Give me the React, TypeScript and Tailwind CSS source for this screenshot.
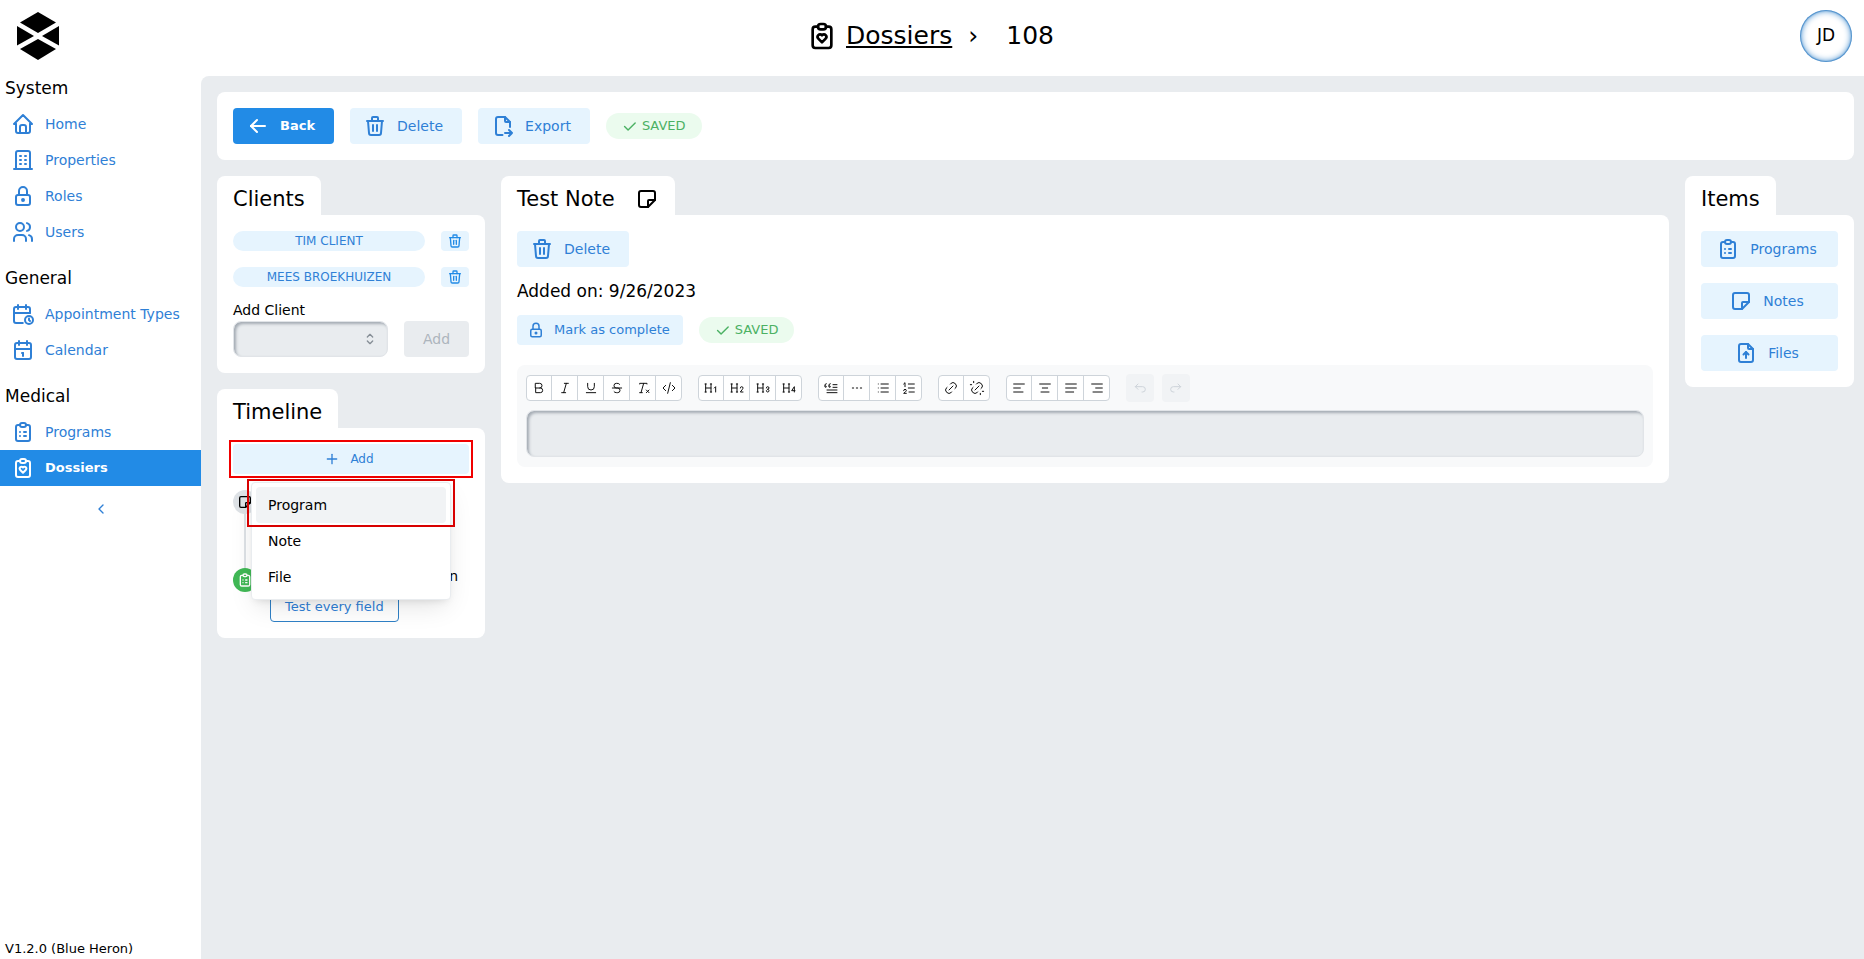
import type { ReactNode } from "react";
import type { IconType } from "react-icons";
import {
  TbAlignCenter,
  TbAlignJustified,
  TbAlignLeft,
  TbAlignRight,
  TbArrowBackUp,
  TbArrowForwardUp,
  TbArrowLeft,
  TbBlockquote,
  TbBold,
  TbBuilding,
  TbCalendar,
  TbCalendarTime,
  TbCheck,
  TbChevronLeft,
  TbClearFormatting,
  TbClipboardHeart,
  TbClipboardList,
  TbCode,
  TbFileExport,
  TbFileUpload,
  TbH1,
  TbH2,
  TbH3,
  TbH4,
  TbHome,
  TbItalic,
  TbLineDashed,
  TbLink,
  TbList,
  TbListNumbers,
  TbLock,
  TbNote,
  TbPlus,
  TbSelector,
  TbStrikethrough,
  TbTrash,
  TbUnderline,
  TbUnlink,
  TbUsers,
} from "react-icons/tb";

type NavItem = { label: string; icon: IconType; active?: boolean };

const sections: { title: string; items: NavItem[] }[] = [
  {
    title: "System",
    items: [
      { label: "Home", icon: TbHome },
      { label: "Properties", icon: TbBuilding },
      { label: "Roles", icon: TbLock },
      { label: "Users", icon: TbUsers },
    ],
  },
  {
    title: "General",
    items: [
      { label: "Appointment Types", icon: TbCalendarTime },
      { label: "Calendar", icon: TbCalendar },
    ],
  },
  {
    title: "Medical",
    items: [
      { label: "Programs", icon: TbClipboardList },
      { label: "Dossiers", icon: TbClipboardHeart, active: true },
    ],
  },
];

const toolGroups: { label: string; icon: IconType }[][] = [
  [
    { label: "Bold", icon: TbBold },
    { label: "Italic", icon: TbItalic },
    { label: "Underline", icon: TbUnderline },
    { label: "Strikethrough", icon: TbStrikethrough },
    { label: "Clear formatting", icon: TbClearFormatting },
    { label: "Code", icon: TbCode },
  ],
  [
    { label: "Heading 1", icon: TbH1 },
    { label: "Heading 2", icon: TbH2 },
    { label: "Heading 3", icon: TbH3 },
    { label: "Heading 4", icon: TbH4 },
  ],
  [
    { label: "Blockquote", icon: TbBlockquote },
    { label: "Horizontal line", icon: TbLineDashed },
    { label: "Bullet list", icon: TbList },
    { label: "Ordered list", icon: TbListNumbers },
  ],
  [
    { label: "Link", icon: TbLink },
    { label: "Remove link", icon: TbUnlink },
  ],
  [
    { label: "Align left", icon: TbAlignLeft },
    { label: "Align center", icon: TbAlignCenter },
    { label: "Justify", icon: TbAlignJustified },
    { label: "Align right", icon: TbAlignRight },
  ],
];

function Logo() {
  return (
    <svg viewBox="0 0 42 48" className="ml-[5px] h-12 w-[42px]" aria-label="Logo" role="img">
      <path d="M21 0L39 10.5L21 21L3 10.5Z" />
      <path d="M21 27L39 37L21 48L3 37Z" />
      <path d="M0 14L17 24L0 33.500Z" />
      <path d="M42 14L25 24L42 33.500Z" />
    </svg>
  );
}

function ActionButton({ icon: Icon, label, filled }: { icon: IconType; label: string; filled?: boolean }) {
  return (
    <button
      type="button"
      className={
        "flex h-9 items-center justify-center gap-[10px] rounded pr-[19px] pl-[13px] " +
        (filled ? "bg-[#228be6] text-[13px] font-bold text-white" : "bg-[#e6f4fe] text-sm text-[#2f80d6]")
      }
    >
      <Icon size={24} />
      {label}
    </button>
  );
}

function SavedBadge() {
  return (
    <span className="flex h-[26px] items-center gap-1 rounded-full bg-[#ebfbee] pr-4 pl-[15px] text-[13px] text-[#4bb163]">
      <TbCheck size={17} />
      SAVED
    </span>
  );
}

function Panel({ title, icon, children }: { title: string; icon?: ReactNode; children: ReactNode }) {
  return (
    <section className="flex flex-col items-stretch">
      <div className="flex h-[39px] items-center gap-5 self-start rounded-t-lg bg-white px-4 pt-[6px]">
        <h2 className="text-[21px] leading-6">{title}</h2>
        {icon}
      </div>
      <div className="rounded-lg rounded-tl-none bg-white p-4">{children}</div>
    </section>
  );
}

function ClientRow({ name }: { name: string }) {
  return (
    <li className="flex items-center gap-4">
      <span className="flex h-5 flex-1 items-center justify-center rounded-full bg-[#e6f4fe] text-xs text-[#2f80d6]">
        {name}
      </span>
      <button
        type="button"
        aria-label={"Remove " + name}
        className="flex h-5 w-7 items-center justify-center rounded bg-[#e6f4fe] text-[#228be6]"
      >
        <TbTrash size={16} />
      </button>
    </li>
  );
}

function ClientsPanel() {
  return (
    <Panel title="Clients">
      <ul className="flex flex-col gap-4">
        <ClientRow name="TIM CLIENT" />
        <ClientRow name="MEES BROEKHUIZEN" />
      </ul>
      <label htmlFor="client" className="mt-3 block text-sm leading-[22px]">
        Add Client
      </label>
      <div className="flex gap-4">
        <div className="relative flex-1">
          <select
            id="client"
            className="h-9 w-full appearance-none rounded-lg border border-[#e1e4e8] bg-[#e9ecef] shadow-[inset_2px_2px_3px_#a4abb3]"
          />
          <TbSelector size={16} className="pointer-events-none absolute top-[10px] right-[10px] text-[#868e96]" />
        </div>
        <button type="button" disabled className="h-9 w-[65px] rounded bg-[#e9ecef] text-sm text-[#adb5bd]">
          Add
        </button>
      </div>
    </Panel>
  );
}

function TimelinePanel() {
  return (
    <Panel title="Timeline">
      <div className="relative">
        <button
          type="button"
          className="flex h-[30px] w-full items-center justify-center gap-[10px] rounded bg-[#e6f4fe] pr-1 text-xs text-[#2f80d6]"
        >
          <TbPlus size={16} />
          Add
        </button>
        <div className="pointer-events-none absolute -inset-1 border-2 border-[#f00000]" />
        <div className="absolute top-[38px] left-[18px] z-10 w-[200px] rounded border border-[#e9ecef] bg-white p-1 shadow-[0_10px_25px_-5px_rgba(0,0,0,0.12),0_4px_8px_-4px_rgba(0,0,0,0.12)]">
          <ul role="menu">
            <li>
              <button type="button" role="menuitem" className="h-9 w-full rounded bg-[#f1f3f5] px-3 text-left text-sm">
                Program
              </button>
            </li>
            <li>
              <button type="button" role="menuitem" className="h-9 w-full rounded px-3 text-left text-sm">
                Note
              </button>
            </li>
            <li>
              <button type="button" role="menuitem" className="h-9 w-full rounded px-3 text-left text-sm">
                File
              </button>
            </li>
          </ul>
          <div className="pointer-events-none absolute -top-1 -right-[5px] -left-[5px] h-12 border-2 border-[#d80000]" />
        </div>
      </div>
      <ol className="mt-4">
        <li className="flex h-[78px] flex-col">
          <span className="flex size-6 shrink-0 items-center justify-center rounded-full bg-[#dee2e6]">
            <TbNote size={16} />
          </span>
          <span className="ml-[11px] w-[2px] flex-1 bg-[#dee2e6]" />
        </li>
        <li className="flex gap-[13px]">
          <span className="flex size-6 shrink-0 items-center justify-center rounded-full bg-[#40b855] text-white">
            <TbClipboardList size={16} />
          </span>
          <div className="flex flex-1 flex-col items-start gap-2">
            <span className="self-end pr-[11px] text-sm leading-4">Completion</span>
            <button
              type="button"
              className="h-[30px] rounded border border-[#2f80c6] px-[14px] text-[13px] text-[#2f80d6]"
            >
              Test every field
            </button>
          </div>
        </li>
      </ol>
    </Panel>
  );
}

function Editor() {
  return (
    <div className="mt-5 rounded-lg bg-[#f8f9fa] px-[9px] pt-[9px] pb-[10px]">
      <div className="flex flex-wrap items-center gap-4">
        {toolGroups.map((group) => (
          <div
            key={group[0].label}
            className="flex h-[26px] divide-x divide-[#ced4da] overflow-hidden rounded border border-[#ced4da] bg-white"
          >
            {group.map(({ label, icon: Icon }) => (
              <button
                key={label}
                type="button"
                aria-label={label}
                className="flex w-[26px] items-center justify-center text-[#111] first:w-[25px] last:w-[25px]"
              >
                <Icon size={16} className="stroke-[1.5]" />
              </button>
            ))}
          </div>
        ))}
        <div className="flex gap-2">
          <button
            type="button"
            disabled
            aria-label="Undo"
            className="flex size-7 items-center justify-center rounded bg-[#f1f3f5] text-[#ced4da]"
          >
            <TbArrowBackUp size={16} className="stroke-[1.5]" />
          </button>
          <button
            type="button"
            disabled
            aria-label="Redo"
            className="flex size-7 items-center justify-center rounded bg-[#f1f3f5] text-[#ced4da]"
          >
            <TbArrowForwardUp size={16} className="stroke-[1.5]" />
          </button>
        </div>
      </div>
      <textarea
        aria-label="Note text"
        rows={1}
        className="mt-2 block h-[47px] w-full resize-none rounded-lg border border-[#e1e4e8] bg-[#e9ecef] p-3 text-sm shadow-[inset_2px_2px_3px_#a4abb3]"
      />
    </div>
  );
}

function Sidebar() {
  return (
    <aside className="flex w-[201px] shrink-0 flex-col">
      <nav className="flex flex-col gap-4">
        {sections.map((section) => (
          <div key={section.title}>
            <h2 className="pb-[6px] pl-[5px] text-[17px] leading-6">{section.title}</h2>
            {section.items.map(({ label, icon: Icon, active }) => (
              <a
                key={label}
                href="#"
                className={
                  "flex h-9 items-center gap-[10px] pl-[11px] whitespace-nowrap " +
                  (active ? "bg-[#228be6] text-[13px] font-bold text-white" : "text-sm text-[#2f80d6]")
                }
              >
                <Icon size={24} />
                {label}
              </a>
            ))}
          </div>
        ))}
      </nav>
      <button type="button" aria-label="Collapse menu" className="mt-[15px] self-center text-[#2f80d6]">
        <TbChevronLeft size={16} />
      </button>
      <p className="mt-auto pb-[2px] pl-[5px] text-[13px] leading-4">V1.2.0 (Blue Heron)</p>
    </aside>
  );
}

export default function App() {
  return (
    <div className="flex min-h-screen flex-col bg-white font-['DejaVu_Sans',sans-serif] text-black">
      <header className="grid h-[76px] grid-cols-[1fr_auto_1fr] items-center px-3 pb-1">
        <Logo />
        <div className="flex items-center pr-1 text-[25px]">
          <TbClipboardHeart size={32} className="mr-2" />
          <a href="#" className="underline underline-offset-2">
            Dossiers
          </a>
          <span className="mx-4">›</span>
          <h1 className="ml-3">108</h1>
        </div>
        <button
          type="button"
          className="flex size-[52px] items-center justify-center justify-self-end rounded-full bg-white text-[17px] shadow-[inset_0_0_7px_#1c75c4,inset_0_0_1px_1px_#7ba9d4]"
        >
          JD
        </button>
      </header>
      <div className="flex flex-1">
        <Sidebar />
        <main className="flex min-w-0 flex-1 flex-col gap-4 rounded-tl-lg bg-[#e9ecef] py-4 pr-[10px] pl-4">
          <div className="flex items-center gap-4 rounded-lg bg-white p-4">
            <ActionButton icon={TbArrowLeft} label="Back" filled />
            <ActionButton icon={TbTrash} label="Delete" />
            <ActionButton icon={TbFileExport} label="Export" />
            <SavedBadge />
          </div>
          <div className="flex items-start gap-4">
            <div className="flex w-[268px] shrink-0 flex-col gap-4">
              <ClientsPanel />
              <TimelinePanel />
            </div>
            <div className="min-w-0 flex-1">
              <Panel title="Test Note" icon={<TbNote size={24} />}>
                <div className="flex">
                  <ActionButton icon={TbTrash} label="Delete" />
                </div>
                <p className="my-3 text-[17px] leading-6">Added on: 9/26/2023</p>
                <div className="flex items-center gap-4">
                  <button
                    type="button"
                    className="flex h-[30px] items-center gap-[9px] rounded bg-[#e6f4fe] pr-[13px] pl-[10px] text-[13px] text-[#2f80d6]"
                  >
                    <TbLock size={18} />
                    Mark as complete
                  </button>
                  <SavedBadge />
                </div>
                <Editor />
              </Panel>
            </div>
            <div className="w-[169px] shrink-0">
              <Panel title="Items">
                <div className="flex flex-col gap-4">
                  <ActionButton icon={TbClipboardList} label="Programs" />
                  <ActionButton icon={TbNote} label="Notes" />
                  <ActionButton icon={TbFileUpload} label="Files" />
                </div>
              </Panel>
            </div>
          </div>
        </main>
      </div>
    </div>
  );
}
